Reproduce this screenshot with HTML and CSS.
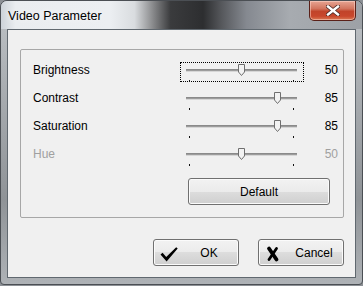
FILE: index.html
```html
<!DOCTYPE html>
<html lang="en">
<head>
    <meta charset="UTF-8">
    <title>Video Parameter</title>
    <link rel="stylesheet" href="styles.css">
</head>
<body>
    <div class="window">
        <div class="titlebar">
            <span class="title">Video Parameter</span>
            <button class="close-button" title="Close">
                <svg width="14" height="11" viewBox="0 0 14 11">
                    <path d="M2 1.5 L12 9.5 M12 1.5 L2 9.5" stroke="#4a2a26" stroke-width="4" stroke-linecap="square"/>
                    <path d="M2 1.5 L12 9.5 M12 1.5 L2 9.5" stroke="#ffffff" stroke-width="2.4" stroke-linecap="square"/>
                </svg>
            </button>
        </div>

        <div class="client">
            <div class="group">
                <div class="param-row">
                    <span class="param-label">Brightness</span>
                    <div class="slider focused">
                        <div class="track"></div>
                        <svg class="thumb" style="left: 57px" width="7" height="12" viewBox="0 0 7 12">
                            <path d="M0.5 0.5 H6.5 V8 L3.5 11.5 L0.5 8 Z" fill="#f2f2f2" stroke="#6f6f6f"/>
                        </svg>
                        <div class="tick tick-start"></div>
                        <div class="tick tick-end"></div>
                    </div>
                    <span class="param-value">50</span>
                </div>

                <div class="param-row">
                    <span class="param-label">Contrast</span>
                    <div class="slider">
                        <div class="track"></div>
                        <svg class="thumb" style="left: 93px" width="7" height="12" viewBox="0 0 7 12">
                            <path d="M0.5 0.5 H6.5 V8 L3.5 11.5 L0.5 8 Z" fill="#f2f2f2" stroke="#6f6f6f"/>
                        </svg>
                        <div class="tick tick-start"></div>
                        <div class="tick tick-end"></div>
                    </div>
                    <span class="param-value">85</span>
                </div>

                <div class="param-row">
                    <span class="param-label">Saturation</span>
                    <div class="slider">
                        <div class="track"></div>
                        <svg class="thumb" style="left: 93px" width="7" height="12" viewBox="0 0 7 12">
                            <path d="M0.5 0.5 H6.5 V8 L3.5 11.5 L0.5 8 Z" fill="#f2f2f2" stroke="#6f6f6f"/>
                        </svg>
                        <div class="tick tick-start"></div>
                        <div class="tick tick-end"></div>
                    </div>
                    <span class="param-value">85</span>
                </div>

                <div class="param-row disabled">
                    <span class="param-label">Hue</span>
                    <div class="slider">
                        <div class="track"></div>
                        <svg class="thumb" style="left: 57px" width="7" height="12" viewBox="0 0 7 12">
                            <path d="M0.5 0.5 H6.5 V8 L3.5 11.5 L0.5 8 Z" fill="#f2f2f2" stroke="#6f6f6f"/>
                        </svg>
                        <div class="tick tick-start"></div>
                        <div class="tick tick-end"></div>
                    </div>
                    <span class="param-value">50</span>
                </div>

                <div class="default-row">
                    <button class="win-button default-button">Default</button>
                </div>
            </div>

            <div class="footer">
                <button class="win-button dialog-button">
                    <svg width="20" height="20" viewBox="0 0 20 20">
                        <path d="M0.5 11.5 L2.6 9.8 L6.2 14 L16.2 4.2 L17.7 5.5 L6.6 18.4 Z" fill="#000"/>
                    </svg>
                    <span>OK</span>
                </button>
                <button class="win-button dialog-button">
                    <svg width="20" height="20" viewBox="0 0 20 20">
                        <path d="M4 5.5 L11.5 16.5" stroke="#000" stroke-width="3.8" stroke-linecap="round"/>
                        <path d="M11.5 5.5 L4 16.5" stroke="#000" stroke-width="2.8" stroke-linecap="round"/>
                    </svg>
                    <span>Cancel</span>
                </button>
            </div>
        </div>
    </div>
</body>
</html>
```

FILE: styles.css
```css
* {
    margin: 0;
    padding: 0;
    box-sizing: border-box;
}

body {
    width: 363px;
    height: 286px;
    background: #8c9095;
    font-family: "Liberation Sans", Arial, sans-serif;
    font-size: 12px;
    color: #000;
    overflow: hidden;
}

.window {
    width: 363px;
    height: 285px;
    border: 1px solid #4b4f54;
    border-radius: 7px 7px 4px 4px;
    padding: 0 6px 6px 6px;
    background: linear-gradient(180deg, #bfc3c7 0%, #a3a7ab 40%, #8f9397 70%, #aeb2b6 100%);
    display: flex;
    flex-direction: column;
}

.titlebar {
    height: 28px;
    margin: 0 -6px;
    padding: 0 6px 0 7px;
    display: flex;
    align-items: flex-start;
    border-radius: 6px 6px 0 0;
    background: linear-gradient(90deg, #cdd3d9 0%, #eaedf0 4%, #eceff2 30%, #d9dcdf 37%, #8a8b8d 42%, #3a3b3d 47%, #2d2e30 56%, #55575b 61%, #858990 68%, #a7abb0 80%, #9da1a6 100%);
}

.title {
    line-height: 30px;
    font-size: 12.5px;
    color: #000;
    text-shadow: 0 0 6px rgba(255, 255, 255, 0.9);
    flex: 1;
}

.close-button {
    width: 47px;
    height: 20px;
    border: 1px solid #5a2018;
    border-top: none;
    border-radius: 0 0 5px 5px;
    background: linear-gradient(180deg, #e7a593 0%, #d2755f 40%, #c1442a 55%, #c8472c 80%, #d97a55 100%);
    box-shadow: inset 0 0 0 1px rgba(255, 220, 210, 0.5);
    display: flex;
    align-items: center;
    justify-content: center;
}

.client {
    flex: 1;
    background: #f0f0f0;
    border: 1px solid #60686f;
    padding: 19px 11px 11px 12px;
    display: flex;
    flex-direction: column;
}

.group {
    height: 169px;
    border: 1px solid #a7a7a7;
    border-radius: 2px;
    padding: 6px 5px 0 12px;
}

.param-row {
    height: 28px;
    display: flex;
    align-items: center;
}

.param-label {
    flex: 1;
}

.slider {
    position: relative;
    width: 124px;
    height: 20px;
    margin-top: 3px;
    border: 1px dotted transparent;
}

.slider.focused {
    border-color: #000;
}

.track {
    position: absolute;
    left: 5px;
    top: 6px;
    width: 111px;
    height: 3px;
    background: linear-gradient(180deg, #8a8a8a 0 1px, #9c9c9c 1px 2px, #d6d6d6 2px 3px);
}

.thumb {
    position: absolute;
    top: 1px;
}

.tick {
    position: absolute;
    top: 17px;
    width: 1px;
    height: 2px;
    background: #111;
}

.tick-start {
    left: 8px;
}

.tick-end {
    left: 112px;
}

.param-value {
    width: 34px;
    text-align: right;
}

.disabled .param-label,
.disabled .param-value {
    color: #a0a0a0;
}

.default-row {
    display: flex;
    justify-content: flex-end;
    padding-right: 8px;
    margin-top: 10px;
}

.win-button {
    height: 27px;
    border: 1px solid #707070;
    border-radius: 3px;
    background: linear-gradient(180deg, #f2f2f2 0%, #ebebeb 50%, #dddddd 50%, #cfcfcf 100%);
    box-shadow: inset 0 0 0 1px #fbfbfb;
    font-family: "Liberation Sans", Arial, sans-serif;
    font-size: 12px;
    color: #000;
}

.default-button {
    width: 142px;
}

.footer {
    margin-top: auto;
    display: flex;
    justify-content: flex-end;
    gap: 19px;
}

.dialog-button {
    width: 86px;
    display: flex;
    align-items: center;
    padding-left: 6px;
}

.dialog-button span {
    flex: 1;
    text-align: center;
}
```
